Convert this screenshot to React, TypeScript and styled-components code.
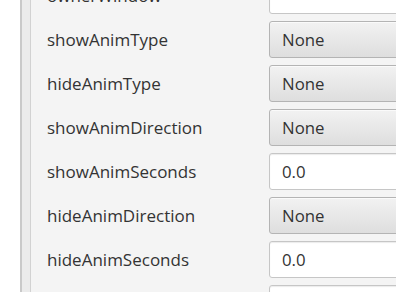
import React from 'react';
import styled, { createGlobalStyle } from 'styled-components';

const Global = createGlobalStyle`
    html, body {
        margin: 0;
        padding: 0;
        background: #ffffff;
        overflow: hidden;
    }
`

const Page = styled.div`
    width: 396px;
    height: 292px;
    display: flex;
    overflow: hidden;
    background: #ffffff;
    font-family: "Open Sans", "Noto Sans", sans-serif;
`

const Gutter = styled.div`
    width: 20px;
    flex: none;
    background: #ffffff;
`

const Frame = styled.div`
    width: 8px;
    flex: none;
    border-left: 2px solid #c9c9c9;
    border-right: 1px solid #d2d2d2;
    background: #ebebeb;
`

const Sheet = styled.div`
    flex: 1;
    background: #f4f4f4;
    overflow: hidden;
`

const Grid = styled.div`
    display: grid;
    grid-template-columns: 222px 200px;
    grid-auto-rows: 37px;
    row-gap: 7px;
    margin-top: -23px;
    padding-left: 16px;
`

const Label = styled.div`
    display: flex;
    align-items: center;
    font-size: 17px;
    color: #333333;
    white-space: nowrap;
`

const Control = styled.div<{ $combo?: boolean }>`
    box-sizing: border-box;
    height: 37px;
    border: 1px solid ${p => (p.$combo ? '#b4b4b4' : '#c6c6c6')};
    border-radius: 3px;
    background: ${p => (p.$combo
        ? 'linear-gradient(to bottom, #f2f2f2 0%, #e6e6e6 60%, #dedede 100%)'
        : '#ffffff')};
    box-shadow: ${p => (p.$combo ? 'inset 0 1px 0 #fafafa' : 'inset 0 1px 1px #ececec')};
    display: flex;
    align-items: center;
    padding-left: 12px;
    font-size: 16.8px;
    color: #333333;
`

const rows: { label: string; value: string; combo: boolean }[] = [
    { label: 'ownerWindow', value: '', combo: false },
    { label: 'showAnimType', value: 'None', combo: true },
    { label: 'hideAnimType', value: 'None', combo: true },
    { label: 'showAnimDirection', value: 'None', combo: true },
    { label: 'showAnimSeconds', value: '0.0', combo: false },
    { label: 'hideAnimDirection', value: 'None', combo: true },
    { label: 'hideAnimSeconds', value: '0.0', combo: false },
    { label: '', value: '', combo: false },
];

function App() {
    return (
        <Page>
            <Global />
            <Gutter />
            <Frame />
            <Sheet>
                <Grid>
                    {rows.map((r, i) => (
                        <React.Fragment key={i}>
                            <Label>{r.label}</Label>
                            <Control $combo={r.combo}>{r.value}</Control>
                        </React.Fragment>
                    ))}
                </Grid>
            </Sheet>
        </Page>
    );
}

export default App;
